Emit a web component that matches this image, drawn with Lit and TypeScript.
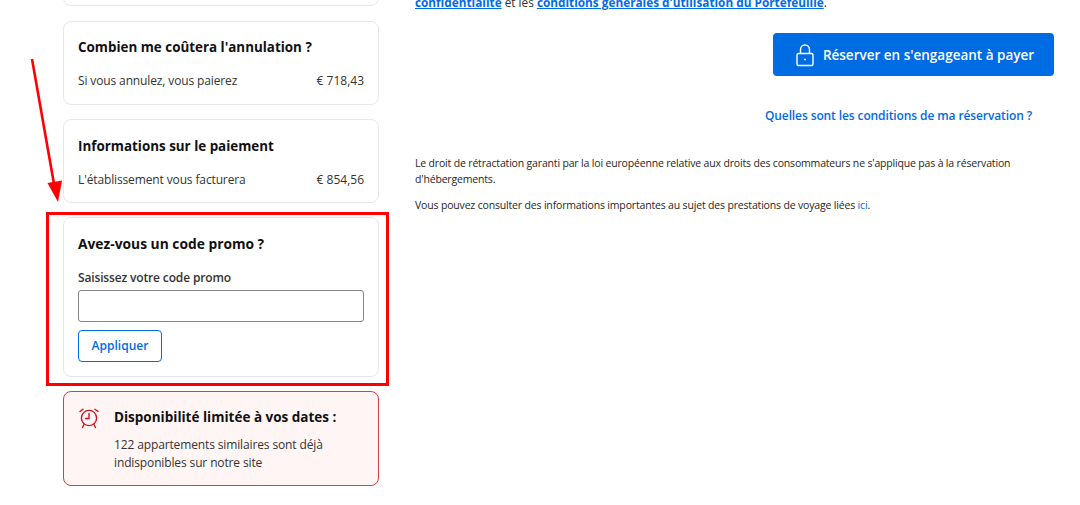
import { LitElement, html, css } from "lit";
import { customElement } from "lit/decorators.js";

@customElement("app-root")
export class AppRoot extends LitElement {
  static styles = css`
    :host {
      display: block;
      position: relative;
      width: 1080px;
      height: 505px;
      overflow: hidden;
      background: #fff;
      font-family: "Open Sans", "Noto Sans", sans-serif;
      color: #1a1a1a;
    }
    .page {
      display: flex;
      align-items: flex-start;
      padding-left: 63px;
      gap: 36px;
      margin-top: -40px;
    }
    .left {
      width: 316px;
      flex: none;
      display: flex;
      flex-direction: column;
      gap: 15px;
    }
    .card {
      box-sizing: border-box;
      border: 1px solid #e7e7e7;
      border-radius: 8px;
      padding: 16px 14px;
      background: #fff;
    }
    .stub { height: 46px; }
    .cost { height: 84px; }
    .cost.first { padding-top: 15px; margin-bottom: -1px; }
    .promo { height: 160px; margin-top: -1px; }
    h3 {
      margin: 0;
      font-size: 13.4px;
      line-height: 20px;
      font-weight: 700;
      color: #111;
    }
    .promo h3 { font-size: 13.8px; }
    .row {
      display: flex;
      justify-content: space-between;
      margin-top: 15px;
      font-size: 12px;
      line-height: 18px;
      color: #333;
    }
    .row .desc { letter-spacing: -0.13px; }
    label {
      display: block;
      margin-top: 15px;
      font-size: 12px;
      line-height: 18px;
      font-weight: 600;
      letter-spacing: -0.15px;
      color: #333;
    }
    .input {
      box-sizing: border-box;
      height: 32px;
      margin-top: 3px;
      border: 1px solid #868686;
      border-radius: 3px;
      background: #fff;
    }
    .apply {
      display: block;
      box-sizing: border-box;
      margin-top: 8px;
      width: 84px;
      height: 32px;
      border: 1px solid #006ce4;
      border-radius: 4px;
      background: #fff;
      color: #006ce4;
      font: 600 12px "Open Sans", sans-serif;
      padding: 0 0 2px;
    }
    .alert {
      box-sizing: border-box;
      height: 95px;
      margin-top: -1px;
      border: 1px solid #dd3a44;
      border-radius: 8px;
      background: #fff5f5;
      padding: 15px 14px;
      display: flex;
      gap: 14px;
    }
    .alert svg { flex: none; margin-top: -1px; }
    .alert h3 { font-size: 13.5px; line-height: 20px; }
    .alert p {
      margin: 9px 0 0;
      font-size: 12px;
      line-height: 18px;
      letter-spacing: -0.13px;
      color: #333;
    }
    .right {
      width: 639px;
      flex: none;
      display: flex;
      flex-direction: column;
      padding-top: 33px;
    }
    .legal {
      margin: 0;
      font-size: 11.8px;
      line-height: 18px;
      color: #333;
    }
    .legal a, .more, .ici { color: #006ce4; }
    .legal a { font-weight: 700; }
    .actions {
      display: flex;
      flex-direction: column;
      align-items: flex-end;
    }
    .book {
      box-sizing: border-box;
      display: flex;
      align-items: center;
      justify-content: center;
      gap: 8px;
      margin-top: 22px;
      padding: 0 0 0 2px;
      width: 281px;
      height: 43px;
      border: 0;
      border-radius: 4px;
      background: #006ce4;
      color: #fff;
      font: 600 13.5px "Open Sans", sans-serif;
    }
    .more {
      display: block;
      align-self: flex-end;
      margin: 31px 22px 0 0;
      font-size: 12px;
      line-height: 18px;
      font-weight: 600;
      letter-spacing: -0.11px;
      text-decoration: none;
    }
    .note {
      margin: 30px 0 0;
      width: 610px;
      font-size: 10.5px;
      line-height: 16px;
      letter-spacing: -0.17px;
      color: #262626;
    }
    .note + .note { margin-top: 10px; }
    .ici { text-decoration: none; }
    .overlay {
      position: absolute;
      left: 0;
      top: 0;
      pointer-events: none;
    }
    .frame {
      position: absolute;
      box-sizing: border-box;
      left: 46px;
      top: 212px;
      width: 343px;
      height: 174px;
      border: 3px solid #ff0000;
    }
    .arrow {
      position: absolute;
      left: 0;
      top: 0;
      overflow: visible;
    }
  `;

  render() {
    return html`
      <div class="page">
        <div class="left">
          <div class="card stub"></div>
          <div class="card cost first">
            <h3>Combien me coûtera l'annulation ?</h3>
            <div class="row"><span class="desc">Si vous annulez, vous paierez</span><span>€ 718,43</span></div>
          </div>
          <div class="card cost">
            <h3>Informations sur le paiement</h3>
            <div class="row"><span class="desc">L'établissement vous facturera</span><span>€ 854,56</span></div>
          </div>
          <div class="card promo">
            <h3>Avez-vous un code promo ?</h3>
            <label>Saisissez votre code promo</label>
            <div class="input"></div>
            <button class="apply">Appliquer</button>
          </div>
          <div class="alert">
            <svg width="22" height="24" viewBox="0 0 22 24" fill="none" stroke="#d4111e" stroke-width="1.4" stroke-linecap="round">
              <circle cx="11" cy="12" r="7.6"></circle>
              <path d="M11 7.5V12.5H7.5"></path>
              <path d="M2 5.5L5 3.2M20 5.5L17 3.2"></path>
              <path d="M6 18.5L4.5 21.5M16 18.5L17.5 21.5"></path>
            </svg>
            <div>
              <h3>Disponibilité limitée à vos dates :</h3>
              <p>122 appartements similaires sont déjà<br />indisponibles sur notre site</p>
            </div>
          </div>
        </div>
        <div class="right">
          <p class="legal"><a href="#">confidentialité</a> et les <a href="#">conditions générales d'utilisation du Portefeuille</a>.</p>
          <div class="actions">
            <button class="book">
              <svg width="20" height="24" viewBox="0 0 20 24" fill="none" stroke="#fff" stroke-width="1.4">
                <rect x="2" y="10.5" width="16" height="12" rx="1.5"></rect>
                <path d="M5.5 10.5V6.5a4.5 4.5 0 0 1 9 0v4"></path>
                <circle cx="10" cy="16.5" r="0.9" fill="#fff" stroke="none"></circle>
              </svg>
              Réserver en s'engageant à payer
            </button>
            <a class="more" href="#">Quelles sont les conditions de ma réservation ?</a>
          </div>
          <p class="note">Le droit de rétractation garanti par la loi européenne relative aux droits des consommateurs ne s'applique pas à la réservation d'hébergements.</p>
          <p class="note">Vous pouvez consulter des informations importantes au sujet des prestations de voyage liées <a class="ici" href="#">ici</a>.</p>
        </div>
      </div>
      <div class="overlay">
        <div class="frame"></div>
        <svg class="arrow" width="80" height="210" viewBox="0 0 80 210">
          <path d="M32 59L54 184" stroke="#ff0000" stroke-width="2.6" fill="none"></path>
          <path d="M47.5 183L62 180.5L58 202Z" fill="#ff0000"></path>
        </svg>
      </div>
    `;
  }
}
